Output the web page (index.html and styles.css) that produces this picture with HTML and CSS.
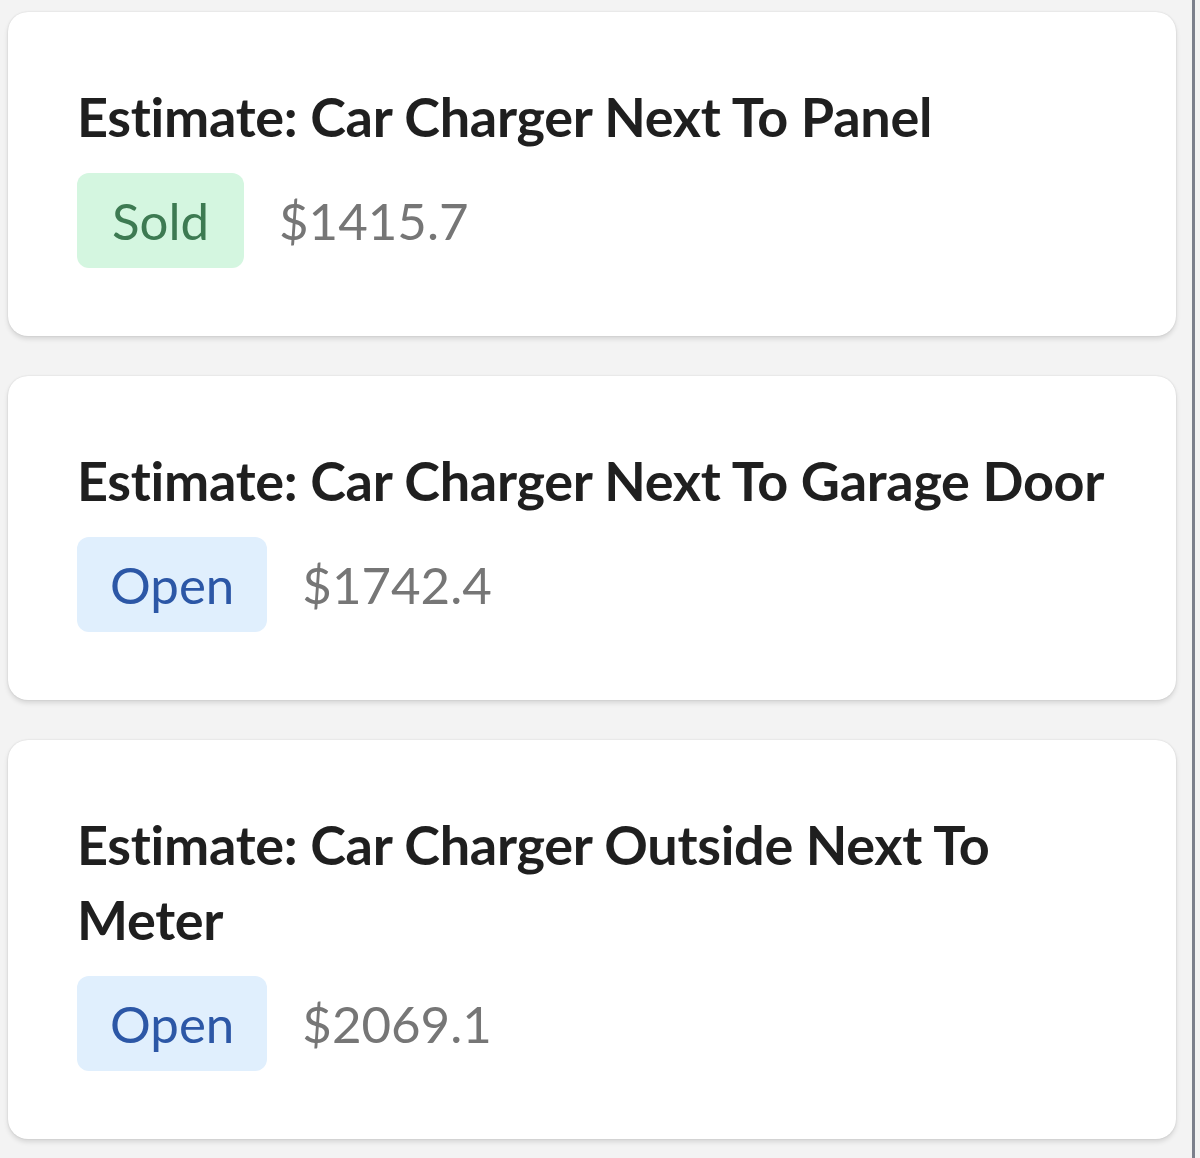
FILE: index.html
```html
<!DOCTYPE html>
<html lang="en">
<head>
  <meta charset="UTF-8">
  <title>Estimates</title>
  <meta name="viewport" content="width=device-width, initial-scale=1.0">
  <link rel="stylesheet" href="styles.css">
</head>
<body>

  <div id="page">
    <div class="estimate-list">

      <div class="estimate-card">
        <div class="estimate-title">Estimate: Car Charger Next To Panel</div>
        <div class="estimate-meta">
          <span class="status sold">Sold</span>
          <span class="price">$1415.7</span>
        </div>
      </div>

      <div class="estimate-card">
        <div class="estimate-title">Estimate: Car Charger Next To Garage Door</div>
        <div class="estimate-meta">
          <span class="status open">Open</span>
          <span class="price">$1742.4</span>
        </div>
      </div>

      <div class="estimate-card">
        <div class="estimate-title">Estimate: Car Charger Outside Next To Meter</div>
        <div class="estimate-meta">
          <span class="status open">Open</span>
          <span class="price">$2069.1</span>
        </div>
      </div>

    </div>
  </div>

</body>
</html>
```

FILE: styles.css
```css
* {
  margin: 0;
  box-sizing: border-box;
  font-family: Lato, 'Open Sans', sans-serif;
}

body {
  background-color: #f3f3f3;
  color: #1f1f1f;
}

#page {
  width: 1195px;
  min-height: 1158px;
  border-right: 3px solid #7c808c;
}

.estimate-list {
  display: flex;
  flex-direction: column;
  gap: 40px;
  padding: 12px 16px 0 8px;
}

.estimate-card {
  background-color: #fff;
  border-radius: 20px;
  padding: 67px 40px 68px 69px;
  box-shadow: 0 3px 5px rgba(0, 0, 0, 0.12), 0 0 2px rgba(0, 0, 0, 0.12);
}

.estimate-title {
  font-size: 54px;
  font-weight: bold;
  letter-spacing: -0.3px;
  line-height: 75px;
  color: #1f1f1f;
}

.estimate-meta {
  display: flex;
  align-items: center;
  gap: 35px;
  margin-top: 19px;
}

.status {
  display: inline-flex;
  align-items: center;
  height: 95px;
  padding: 0 33px;
  border-radius: 12px;
  font-size: 51px;
}
.status.sold {
  background-color: #d4f6e0;
  color: #3d7a52;
  padding: 0 35px;
}
.status.open {
  background-color: #e0effd;
  color: #2c57a6;
}

.price {
  font-size: 51px;
  color: #767676;
}
```
